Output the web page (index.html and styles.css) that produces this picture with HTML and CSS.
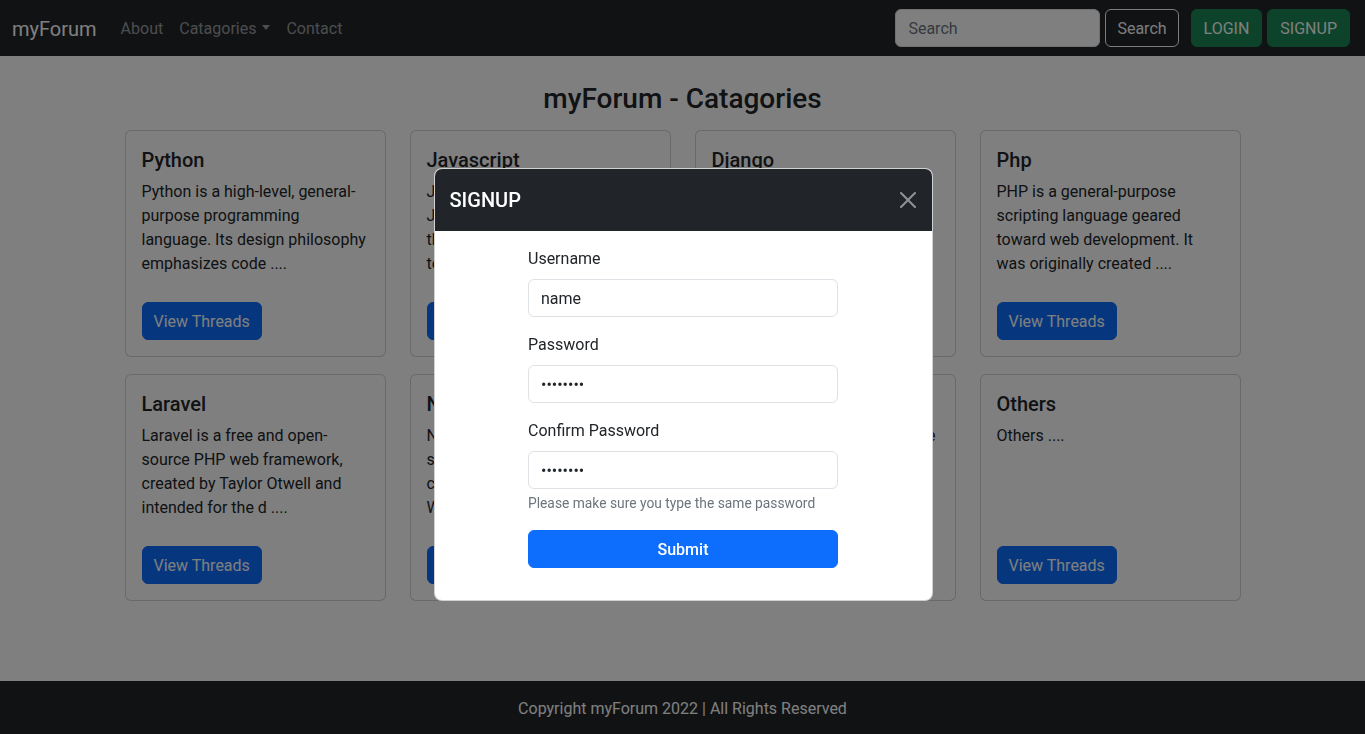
FILE: index.html
```html
<!DOCTYPE html>
<html lang="en">
<head>
<meta charset="utf-8">
<title>myForum - Catagories</title>
<link rel="stylesheet" href="styles.css">
</head>
<body>
<nav class="navbar">
  <a class="brand" href="#">myForum</a>
  <ul class="nav-links">
    <li><a href="#">About</a></li>
    <li><a href="#" class="dropdown">Catagories</a></li>
    <li><a href="#">Contact</a></li>
  </ul>
  <div class="nav-right">
    <form class="search-form">
      <input class="search-input" type="search" placeholder="Search">
      <button class="btn btn-outline-light" type="button">Search</button>
    </form>
    <button class="btn btn-success login" type="button">LOGIN</button>
    <button class="btn btn-success signup" type="button">SIGNUP</button>
  </div>
</nav>

<main class="container">
  <h3 class="page-title">myForum - Catagories</h3>
  <div class="card-grid">
    <div class="card"><div class="card-body">
      <h5 class="card-title">Python</h5>
      <p class="card-text">Python is a high-level, general-purpose programming language. Its design philosophy emphasizes code ....</p>
      <a href="#" class="btn btn-primary">View Threads</a>
    </div></div>
    <div class="card"><div class="card-body">
      <h5 class="card-title">Javascript</h5>
      <p class="card-text">JavaScript, often abbreviated JS, is a programming language that is one of the core technologies ....</p>
      <a href="#" class="btn btn-primary">View Threads</a>
    </div></div>
    <div class="card"><div class="card-body">
      <h5 class="card-title">Django</h5>
      <p class="card-text">Django is a Python-based free and open-source web framework that follows the model ....</p>
      <a href="#" class="btn btn-primary">View Threads</a>
    </div></div>
    <div class="card"><div class="card-body">
      <h5 class="card-title">Php</h5>
      <p class="card-text">PHP is a general-purpose scripting language geared toward web development. It was originally created ....</p>
      <a href="#" class="btn btn-primary">View Threads</a>
    </div></div>
    <div class="card"><div class="card-body">
      <h5 class="card-title">Laravel</h5>
      <p class="card-text">Laravel is a free and open-source PHP web framework, created by Taylor Otwell and intended for the d ....</p>
      <a href="#" class="btn btn-primary">View Threads</a>
    </div></div>
    <div class="card"><div class="card-body">
      <h5 class="card-title">Node.js</h5>
      <p class="card-text">Node.js is an open-source,<br>server-side JavaScript runtime<br>compiled for many platforms.<br>Works ....</p>
      <a href="#" class="btn btn-primary">View Threads</a>
    </div></div>
    <div class="card"><div class="card-body">
      <h5 class="card-title">React</h5>
      <p class="card-text">React is a free and open-source front-end JavaScript library for building user interfaces based on UI ....</p>
      <a href="#" class="btn btn-primary">View Threads</a>
    </div></div>
    <div class="card"><div class="card-body">
      <h5 class="card-title">Others</h5>
      <p class="card-text">Others ....</p>
      <a href="#" class="btn btn-primary">View Threads</a>
    </div></div>
  </div>
</main>

<footer class="footer">
  <p>Copyright myForum 2022 | All Rights Reserved</p>
</footer>

<div class="backdrop"></div>

<div class="modal" role="dialog">
  <div class="modal-header">
    <h5 class="modal-title">SIGNUP</h5>
    <button class="btn-close" type="button" aria-label="Close">
      <svg width="16" height="16" viewBox="0 0 16 16"><path fill="#fff" d="M.293.293a1 1 0 0 1 1.414 0L8 6.586 14.293.293a1 1 0 1 1 1.414 1.414L9.414 8l6.293 6.293a1 1 0 0 1-1.414 1.414L8 9.414l-6.293 6.293a1 1 0 0 1-1.414-1.414L6.586 8 .293 1.707a1 1 0 0 1 0-1.414z"/></svg>
    </button>
  </div>
  <div class="modal-body">
    <form class="signup-form">
      <div class="form-group">
        <label class="form-label" for="u">Username</label>
        <input class="form-control" id="u" type="text" value="name">
      </div>
      <div class="form-group">
        <label class="form-label" for="p">Password</label>
        <input class="form-control" id="p" type="password" value="password">
      </div>
      <div class="form-group">
        <label class="form-label" for="c">Confirm Password</label>
        <input class="form-control" id="c" type="password" value="password">
        <div class="form-text">Please make sure you type the same password</div>
      </div>
      <button class="btn btn-primary btn-submit" type="button">Submit</button>
    </form>
  </div>
</div>
</body>
</html>
```
FILE: styles.css
```css
* { box-sizing: border-box; }

html, body { height: 100%; }

body {
  margin: 0;
  min-height: 100vh;
  display: flex;
  flex-direction: column;
  font-family: Roboto, "Liberation Sans", sans-serif;
  font-size: 16px;
  line-height: 1.5;
  color: #212529;
  background: #fff;
}

a { text-decoration: none; }

/* ---------- navbar ---------- */
.navbar {
  height: 56px;
  flex: none;
  display: flex;
  align-items: center;
  background: #212529;
  padding: 1px 15px 0 12px;
}
.brand {
  color: #fff;
  font-size: 20px;
  line-height: 30px;
  margin-right: 16px;
}
.nav-links {
  list-style: none;
  display: flex;
  margin: 0;
  padding: 0;
}
.nav-links a {
  display: block;
  padding: 8px;
  color: rgba(255,255,255,.55);
  font-size: 16px;
}
.dropdown::after {
  content: "";
  display: inline-block;
  margin-left: 6px;
  vertical-align: 4px;
  border-top: 5px solid;
  border-left: 4.5px solid transparent;
  border-right: 4.5px solid transparent;
}
.nav-right {
  margin-left: auto;
  display: flex;
  align-items: center;
  margin-top: -1px;
}
.search-form {
  display: flex;
  align-items: center;
}
.search-input {
  width: 205px;
  height: 38px;
  margin-right: 5px;
  padding: 6px 12px;
  border: 1px solid #dee2e6;
  border-radius: 6px;
  font: inherit;
  color: #212529;
  background: #fff;
}
.search-input::placeholder { color: #6c757d; }

.btn {
  display: inline-block;
  height: 38px;
  padding: 6px 12px;
  border: 1px solid transparent;
  border-radius: 6px;
  font-family: inherit;
  font-size: 16px;
  line-height: 25px;
  text-align: center;
  cursor: pointer;
}
.btn-outline-light {
  color: #f8f9fa;
  border-color: #f8f9fa;
  background: transparent;
  padding: 6px 11px;
}
.btn-success {
  color: #fff;
  background: #198754;
  border-color: #198754;
}
.login { margin-left: 12px; }
.signup { margin-left: 5px; }
.btn-primary {
  color: #fff;
  background: #0d6efd;
  border-color: #0d6efd;
}

/* ---------- main ---------- */
.container {
  width: 1140px;
  margin: 0 auto;
  padding: 0 12px;
}
.page-title {
  margin: 26px 0 14px;
  text-align: center;
  font-size: 28px;
  font-weight: 500;
  line-height: 1.2;
}
.card-grid {
  display: grid;
  grid-template-columns: repeat(4, 1fr);
  column-gap: 24px;
  row-gap: 17px;
}
.card {
  display: flex;
  flex-direction: column;
  border: 1px solid rgba(0,0,0,.175);
  border-radius: 6px;
  background: #fff;
}
.card-body {
  flex: 1;
  display: flex;
  flex-direction: column;
  align-items: flex-start;
  padding: 17px 16px 16px;
}
.card-title {
  margin: 0 0 8px;
  font-size: 20px;
  font-weight: 500;
  line-height: 1.2;
}
.card-text {
  margin: 0 0 26px;
}
.card-body .btn {
  margin-top: auto;
  padding: 6px 11px;
}

/* ---------- footer ---------- */
.footer {
  margin-top: auto;
  flex: none;
  height: 53px;
  padding-top: 3px;
  background: #212529;
  display: flex;
  align-items: center;
  justify-content: center;
}
.footer p {
  margin: 0;
  color: #fff;
}

/* ---------- modal ---------- */
.backdrop {
  position: fixed;
  inset: 0;
  background: rgba(0,0,0,.5);
}
.modal {
  position: fixed;
  top: 168px;
  left: calc(50% - 249px);
  width: 499px;
  background: #fff;
  border: 1px solid rgba(0,0,0,.175);
  border-radius: 8px;
  overflow: hidden;
}
.modal-header {
  display: flex;
  align-items: center;
  padding: 16px 16px 16px 15px;
  background: #212529;
}
.modal-title {
  margin: 0;
  color: #fff;
  font-size: 20px;
  font-weight: 500;
  line-height: 30px;
}
.btn-close {
  margin-left: auto;
  margin-right: -4px;
  width: 24px;
  height: 24px;
  padding: 4px;
  border: 0;
  background: transparent;
  opacity: .5;
  display: flex;
  align-items: center;
  justify-content: center;
}
.btn-close svg { display: block; }
.modal-body {
  padding: 16px;
}
.signup-form {
  width: 66.6667%;
  margin: 0 auto;
}
.form-group { margin-bottom: 16px; }
.form-label {
  display: block;
  margin-bottom: 8px;
}
.form-control {
  display: block;
  width: 100%;
  height: 38px;
  padding: 6px 12px;
  border: 1px solid #dee2e6;
  border-radius: 6px;
  font-family: inherit;
  font-size: 16px;
  color: #212529;
  background: #fff;
}
.form-text {
  margin-top: 4px;
  font-size: 13.8px;
  line-height: 21px;
  color: #6c757d;
}
.btn-submit {
  display: block;
  width: 100%;
  margin-bottom: 16px;
  font-weight: 500;
}
```
